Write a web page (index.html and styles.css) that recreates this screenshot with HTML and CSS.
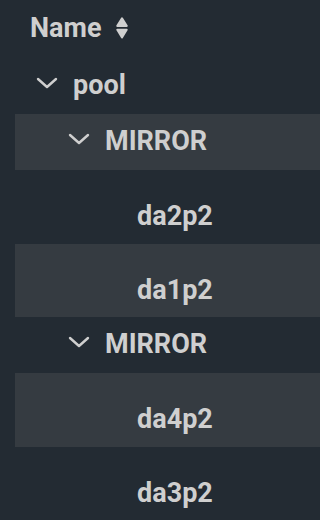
FILE: index.html
```html
<!DOCTYPE html>
<html>
<head>
<meta charset="utf-8">
<link rel="stylesheet" href="styles.css">
</head>
<body>
<div class="table">
  <div class="header">
    <span class="hlabel">Name</span>
    <svg class="sort" width="12" height="22" viewBox="0 0 12 22"><polygon points="1.3,8.9 6,1.4 10.7,8.9" /><polygon points="1.3,12.8 10.7,12.8 6,20.4" /></svg>
  </div>
  <div class="row group lvl0">
    <svg class="chev" width="22" height="12" viewBox="0 0 22 12"><polyline points="2,2 11,10 20,2" /></svg>
    <span class="label">pool</span>
  </div>
  <div class="row group lvl1 odd">
    <svg class="chev" width="22" height="12" viewBox="0 0 22 12"><polyline points="2,2 11,10 20,2" /></svg>
    <span class="label">MIRROR</span>
  </div>
  <div class="row leaf lvl2">
    <span class="spacer"></span>
    <span class="label">da2p2</span>
  </div>
  <div class="row leaf lvl2 odd">
    <span class="spacer"></span>
    <span class="label">da1p2</span>
  </div>
  <div class="row group lvl1">
    <svg class="chev" width="22" height="12" viewBox="0 0 22 12"><polyline points="2,2 11,10 20,2" /></svg>
    <span class="label">MIRROR</span>
  </div>
  <div class="row leaf lvl2 odd">
    <span class="spacer"></span>
    <span class="label">da4p2</span>
  </div>
  <div class="row leaf lvl2">
    <span class="spacer"></span>
    <span class="label">da3p2</span>
  </div>
</div>
</body>
</html>
```
FILE: styles.css
```css
html, body {
  margin: 0;
  padding: 0;
  background: #232b33;
}
body {
  font-family: Roboto, "Liberation Sans", sans-serif;
  font-weight: 700;
  font-size: 27px;
  line-height: 32px;
  color: #cfcfcf;
  overflow: hidden;
  height: 520px;
}
.table {
  padding-left: 15px;
}
.header {
  display: flex;
  align-items: center;
  height: 58px;
  box-sizing: border-box;
  padding-left: 15px;
  padding-bottom: 2px;
}
.hlabel {
  margin-right: 15px;
}
.sort polygon {
  fill: #cfcfcf;
  stroke: #cfcfcf;
  stroke-width: 2;
  stroke-linejoin: round;
}
.row {
  display: flex;
  box-sizing: border-box;
}
.row.odd {
  background: #353b41;
}
.group {
  height: 56px;
  align-items: center;
  padding-bottom: 2px;
}
.leaf {
  height: 73.5px;
  align-items: flex-start;
  padding-top: 30px;
}
.lvl0 { padding-left: 21px; }
.lvl1 { padding-left: 53px; }
.lvl2 { padding-left: 85px; }
.chev {
  flex: none;
  margin-right: 15px;
  margin-bottom: 4px;
}
.chev polyline {
  fill: none;
  stroke: #cfcfcf;
  stroke-width: 2.4;
  stroke-linecap: round;
  stroke-linejoin: round;
}
.spacer {
  flex: none;
  width: 22px;
  margin-right: 15px;
}
.label {
  white-space: nowrap;
}
```
